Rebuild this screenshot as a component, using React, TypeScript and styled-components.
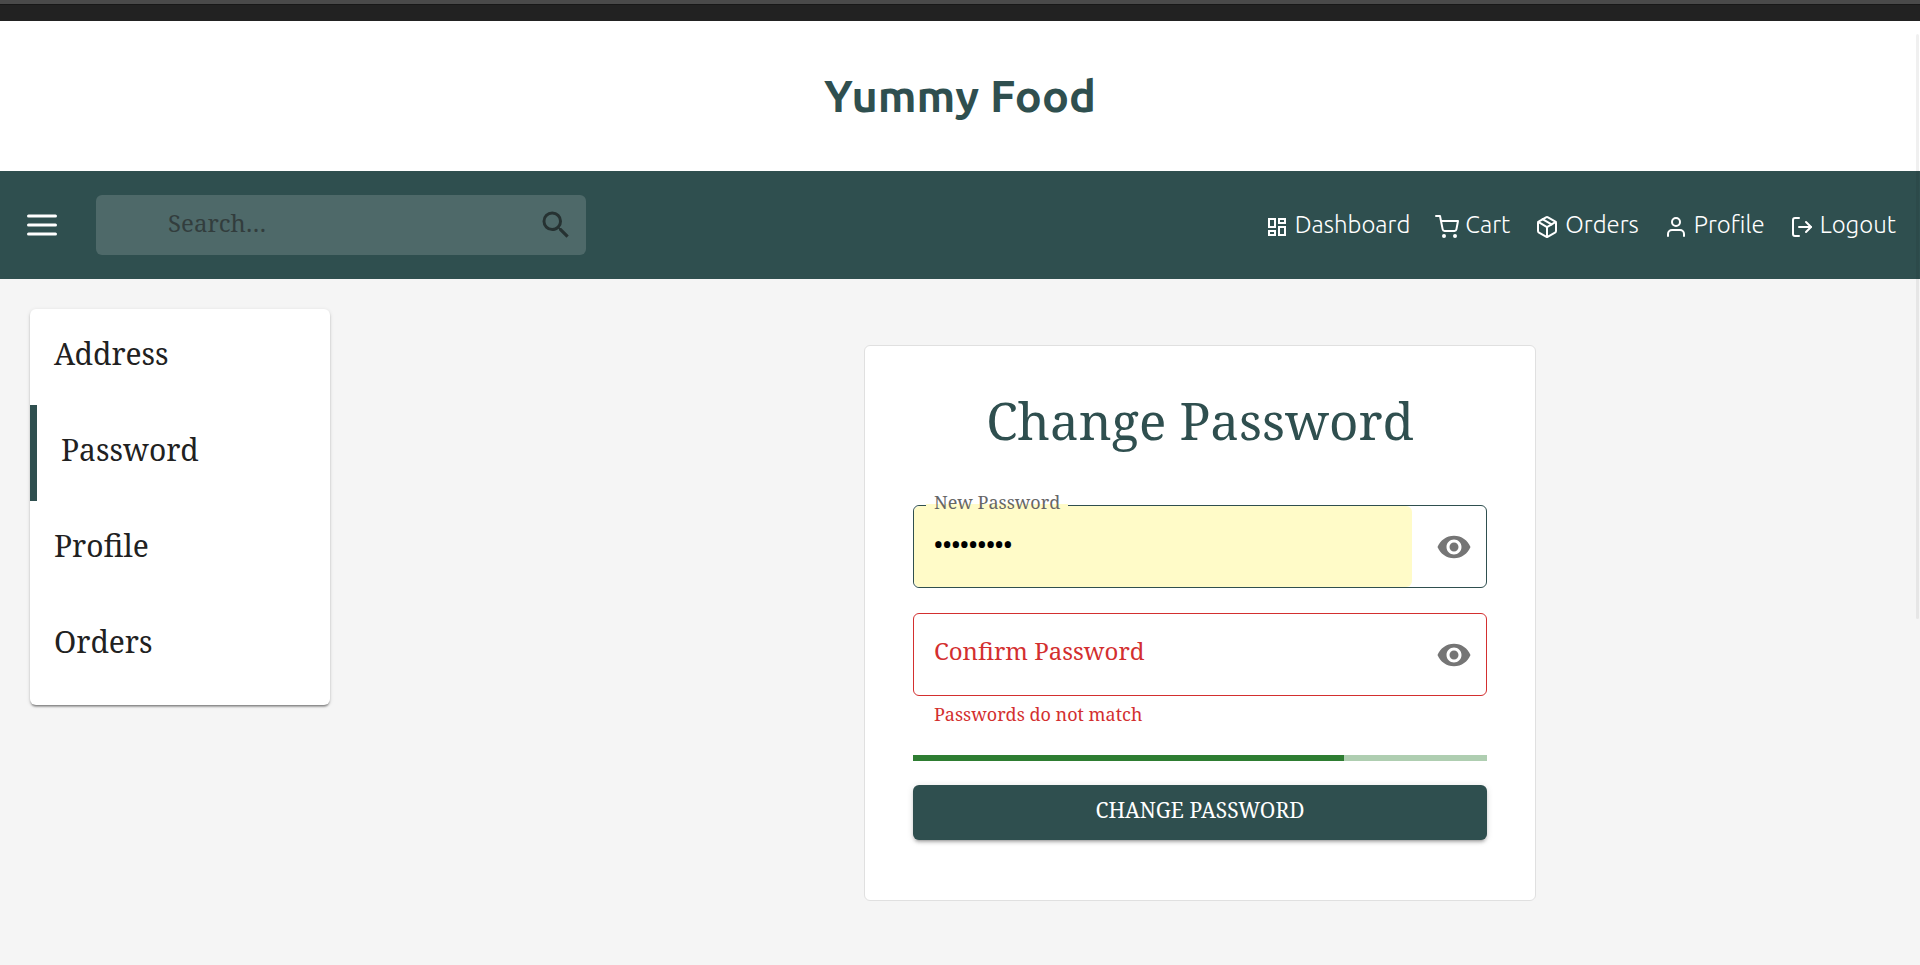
import React, { useState } from 'react';
import styled, { createGlobalStyle, css } from 'styled-components';
import { MdSearch, MdVisibility, MdOutlineDashboard } from 'react-icons/md';
import { FiMenu, FiShoppingCart, FiPackage, FiUser, FiLogOut } from 'react-icons/fi';

const color = {
  primary: '#2f4f4f',
  error: '#d32f2f',
  success: '#2e7d32',
  text: '#212121',
  muted: '#666666',
  icon: '#757575',
  autofill: '#fffbc8',
  page: '#f5f5f5',
};

const serif = '"Noto Serif", "DejaVu Serif", serif';
const sans = 'Ubuntu, "Noto Sans", sans-serif';

const GlobalStyle = createGlobalStyle`
  *, *::before, *::after { box-sizing: border-box; }
  body {
    margin: 0;
    background: ${color.page};
    color: ${color.text};
    font-family: ${serif};
    font-size: 24px;
  }
  button, input { font: inherit; }
`;

const Page = styled.div`
  min-height: 100vh;
`;

const WindowEdge = styled.div`
  height: 21px;
  background: #222222;
  border-top: 4px solid #4a4a4a;
  box-shadow: inset 0 1px 0 #181818;
`;

const ScrollThumb = styled.div`
  position: fixed;
  top: 34px;
  right: 1px;
  width: 3px;
  height: 585px;
  border-radius: 2px;
  background: rgba(0, 0, 0, 0.06);
`;

const Masthead = styled.header`
  display: flex;
  align-items: center;
  justify-content: center;
  height: 150px;
  background: #ffffff;
`;

const Brand = styled.h1`
  margin: 0;
  font: 700 45px/52px ${sans};
  color: ${color.primary};
`;

const Toolbar = styled.div`
  display: flex;
  align-items: center;
  height: 108px;
  padding: 0 24px;
  background: ${color.primary};
`;

const IconButton = styled.button`
  display: flex;
  flex: none;
  padding: 0;
  border: 0;
  background: none;
  color: ${color.icon};
  cursor: pointer;
`;

const MenuButton = styled(IconButton)`
  margin-right: 36px;
  color: #ffffff;
`;

const SearchBox = styled.form`
  display: flex;
  align-items: center;
  width: 490px;
  height: 60px;
  padding: 0 12px 0 72px;
  border-radius: 6px;
  background: rgba(255, 255, 255, 0.15);
`;

const SearchInput = styled.input`
  flex: 1;
  min-width: 0;
  height: 60px;
  padding: 0 0 5px;
  border: 0;
  outline: 0;
  background: none;
  color: ${color.text};
  &::placeholder { color: ${color.text}; opacity: 0.6; }
`;

const SearchButton = styled(IconButton)`
  color: #263232;
`;

const Nav = styled.nav`
  display: flex;
  gap: 25px;
  margin-left: auto;
`;

const NavLink = styled.a`
  display: flex;
  align-items: center;
  gap: 6px;
  font: 300 24px/28px ${sans};
  color: #ffffff;
  text-decoration: none;
  svg { margin-top: 4px; }
`;

const Content = styled.main`
  display: grid;
  grid-template-columns: 25% 75%;
  align-items: start;
  padding: 30px 0;
`;

const Sidebar = styled.nav`
  width: 300px;
  margin-left: 30px;
  padding-bottom: 12px;
  border-radius: 6px;
  background: #ffffff;
  box-shadow: 0 3px 2px -2px rgba(0, 0, 0, 0.3), 0 2px 2px rgba(0, 0, 0, 0.2), 0 1px 4px rgba(0, 0, 0, 0.12);
`;

const SideLink = styled.a<{ $active?: boolean }>`
  display: block;
  height: 96px;
  padding: 24px;
  font-size: 30px;
  line-height: 42px;
  color: ${color.text};
  text-decoration: none;
  ${p => p.$active && css`border-left: 7px solid ${color.primary};`}
`;

const FormArea = styled.section`
  display: flex;
  justify-content: center;
  padding: 36px 0;
`;

const Card = styled.form`
  width: 672px;
  padding: 40px 48px 60px;
  border: 1px solid #e0e0e0;
  border-radius: 6px;
  background: #ffffff;
`;

const Title = styled.h2`
  margin: 0 0 51px;
  font-weight: 400;
  font-size: 51px;
  line-height: 68px;
  text-align: center;
  color: ${color.primary};
`;

const Field = styled.div<{ $error?: boolean }>`
  position: relative;
  display: flex;
  align-items: center;
  height: 83px;
  padding-right: 14px;
  border: 1px solid ${p => (p.$error ? color.error : color.primary)};
  border-radius: 6px;
  & + & { margin-top: 25px; }
`;

const FieldInput = styled.input<{ $filled?: boolean }>`
  flex: 1;
  min-width: 0;
  height: 100%;
  margin-right: 24px;
  padding: 0 20px 6px;
  border: 0;
  border-radius: 6px;
  outline: 0;
  background: ${p => (p.$filled ? color.autofill : 'none')};
  color: #000000;
`;

const FieldLabel = styled.label<{ $shrunk?: boolean; $error?: boolean }>`
  position: absolute;
  left: 20px;
  top: 19px;
  line-height: 36px;
  color: ${p => (p.$error ? color.error : color.muted)};
  ${p => p.$shrunk && css`
    left: 12px;
    top: -17px;
    padding: 0 8px;
    font-size: 18px;
    line-height: 27px;
    background: linear-gradient(#ffffff 15px, ${color.autofill} 15px);
  `}
`;

const HelperText = styled.p`
  margin: 3px 21px 0;
  font-size: 18px;
  line-height: 30px;
  color: ${color.error};
`;

const Meter = styled.div`
  height: 6px;
  margin: 26px 0 24px;
  background: #afceb1;
`;

const MeterFill = styled.div`
  height: 100%;
  background: ${color.success};
`;

const SubmitButton = styled.button`
  display: block;
  width: 100%;
  height: 55px;
  padding: 0 24px 6px;
  border: 0;
  border-radius: 6px;
  font-size: 21px;
  line-height: 36px;
  text-transform: uppercase;
  color: #ffffff;
  background: ${color.primary};
  box-shadow: 0 4px 2px -3px rgba(0, 0, 0, 0.2), 0 3px 3px rgba(0, 0, 0, 0.14), 0 1px 7px rgba(0, 0, 0, 0.12);
  cursor: pointer;
`;

const navItems = [
  { label: 'Dashboard', Icon: MdOutlineDashboard },
  { label: 'Cart', Icon: FiShoppingCart },
  { label: 'Orders', Icon: FiPackage },
  { label: 'Profile', Icon: FiUser },
  { label: 'Logout', Icon: FiLogOut },
];

const sideItems = ['Address', 'Password', 'Profile', 'Orders'];

function PasswordField(props: {
  id: string;
  label: string;
  value: string;
  error?: boolean;
  onChange: (value: string) => void;
}) {
  const { id, label, value, error, onChange } = props;
  const [visible, setVisible] = useState(false);
  const filled = value !== '';
  return (
    <Field $error={error}>
      <FieldInput
        id={id}
        type={visible ? 'text' : 'password'}
        value={value}
        $filled={filled}
        aria-invalid={error}
        onChange={e => onChange(e.target.value)}
      />
      <FieldLabel htmlFor={id} $shrunk={filled} $error={error}>{label}</FieldLabel>
      <IconButton type="button" aria-label="Toggle password visibility" onClick={() => setVisible(!visible)}>
        <MdVisibility size={36} />
      </IconButton>
    </Field>
  );
}

export default function App() {
  const [password, setPassword] = useState('Passw0rd!');
  const [confirm, setConfirm] = useState('');
  const mismatch = password !== confirm;
  const strength = 75;

  return (
    <Page>
      <GlobalStyle />
      <WindowEdge />
      <Masthead>
        <Brand>Yummy Food</Brand>
      </Masthead>
      <Toolbar>
        <MenuButton type="button" aria-label="Open menu"><FiMenu size={36} /></MenuButton>
        <SearchBox role="search" onSubmit={e => e.preventDefault()}>
          <SearchInput type="text" placeholder="Search…" aria-label="Search" />
          <SearchButton type="submit" aria-label="Search"><MdSearch size={36} /></SearchButton>
        </SearchBox>
        <Nav>
          {navItems.map(({ label, Icon }) => (
            <NavLink key={label} href="#"><Icon size={24} />{label}</NavLink>
          ))}
        </Nav>
      </Toolbar>
      <Content>
        <Sidebar>
          {sideItems.map(item => (
            <SideLink key={item} href="#" $active={item === 'Password'}>{item}</SideLink>
          ))}
        </Sidebar>
        <FormArea>
          <Card onSubmit={e => e.preventDefault()}>
            <Title>Change Password</Title>
            <PasswordField id="new-password" label="New Password" value={password} onChange={setPassword} />
            <PasswordField id="confirm-password" label="Confirm Password" value={confirm} error={mismatch} onChange={setConfirm} />
            {mismatch && <HelperText>Passwords do not match</HelperText>}
            <Meter role="progressbar" aria-label="Password strength" aria-valuenow={strength}>
              <MeterFill style={{ width: `${strength}%` }} />
            </Meter>
            <SubmitButton type="submit">Change Password</SubmitButton>
          </Card>
        </FormArea>
      </Content>
      <ScrollThumb />
    </Page>
  );
}
